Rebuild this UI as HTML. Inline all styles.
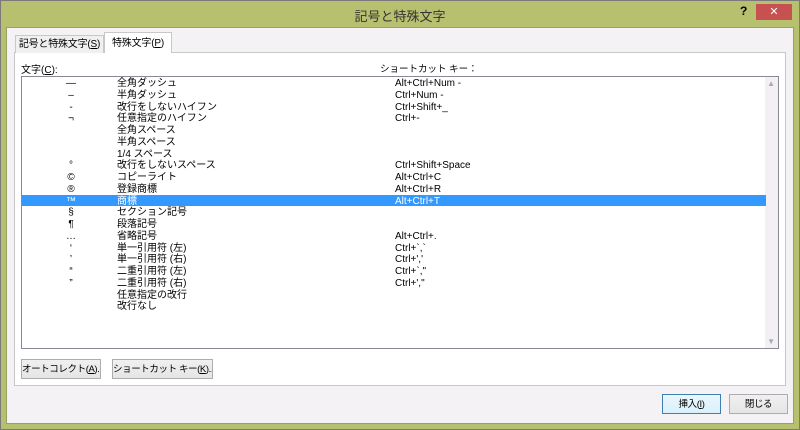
<!DOCTYPE html><html><head><style>
*{margin:0;padding:0;box-sizing:border-box}
body{width:800px;height:430px;overflow:hidden;background:#b7c06f;font-family:"Liberation Sans","Noto Sans CJK JP",sans-serif;font-size:10px;color:#000;position:relative}
.a{position:absolute;white-space:nowrap}
.outer{left:0;top:0;width:800px;height:430px;border:1px solid #7a7a7a}
.title{left:0;top:6px;width:800px;text-align:center;font-size:13px;color:#333}
.client{left:6px;top:27px;width:788px;height:397px;background:#f5f2f5;border:1px solid #9aa060}
.panel{left:14px;top:52px;width:772px;height:334px;background:#fff;border:1px solid #c8c8c8}
.tab{border:1px solid #c8c8c8;border-bottom:none;height:18px;line-height:17px;text-align:center;font-size:10px;letter-spacing:-0.2px}
.list{left:21px;top:76px;width:758px;height:273px;border:1px solid #8a8a96;background:#fff}
.row{position:absolute;left:0;height:11.75px;width:744px;font-size:10px}
.row span{position:absolute;white-space:nowrap;top:0;line-height:13px}
.sel{background:#3399ff;color:#fff}
.btn{border:1px solid #adadad;background:linear-gradient(#f0f0f0,#e5e5e5);text-align:center;line-height:19px;font-size:9.5px;letter-spacing:-0.4px;overflow:hidden}
</style></head><body>
<div class="a outer"></div>
<div class="a title">記号と特殊文字</div>
<div class="a" style="left:740px;top:4px;font-weight:bold;font-size:12px">?</div>
<div class="a" style="left:756px;top:4px;width:36px;height:16px;background:#c75050;color:#fff;text-align:center;line-height:16px;font-size:11px">✕</div>
<div class="a client"></div>
<div class="a panel"></div>
<div class="a tab" style="left:15px;top:35px;width:89px;background:#f0f0f0">記号と特殊文字(<u>S</u>)</div>
<div class="a tab" style="left:104px;top:32px;width:68px;height:21px;background:#fff;line-height:22px">特殊文字(<u>P</u>)</div>
<div class="a" style="left:21px;top:61px">文字(<u>C</u>):</div>
<div class="a" style="left:380px;top:61px;font-size:9.5px">ショートカット キー：</div>
<div class="a list">
<div class="a" style="right:0;top:0;width:13px;height:271px;background:#f2f0f2"></div>
<div class="a" style="right:3px;top:2px;color:#aaa;font-size:8px">▲</div>
<div class="a" style="right:3px;bottom:2px;color:#aaa;font-size:8px">▼</div>
<div id="rows"></div>
</div>
<div class="a btn" style="left:21px;top:359px;width:80px;height:20px">オートコレクト(<u>A</u>)...</div>
<div class="a btn" style="left:112px;top:359px;width:101px;height:20px">ショートカット キー(<u>K</u>)...</div>
<div class="a btn" style="left:662px;top:394px;width:59px;height:20px;border-color:#3c7fb1;background:linear-gradient(#eaf6fd,#d9f0fc)">挿入(<u>I</u>)</div>
<div class="a btn" style="left:729px;top:394px;width:59px;height:20px">閉じる</div>
<script>
var d=[["—","全角ダッシュ","Alt+Ctrl+Num -"],["–","半角ダッシュ","Ctrl+Num -"],["-","改行をしないハイフン","Ctrl+Shift+_"],["¬","任意指定のハイフン","Ctrl+-"],["","全角スペース",""],["","半角スペース",""],["","1/4 スペース",""],["°","改行をしないスペース","Ctrl+Shift+Space"],["©","コピーライト","Alt+Ctrl+C"],["®","登録商標","Alt+Ctrl+R"],["™","商標","Alt+Ctrl+T"],["§","セクション記号",""],["¶","段落記号",""],["…","省略記号","Alt+Ctrl+."],["‘","単一引用符 (左)","Ctrl+`,`"],["’","単一引用符 (右)","Ctrl+','"],["“","二重引用符 (左)","Ctrl+`,\""],["”","二重引用符 (右)","Ctrl+',\""],["","任意指定の改行",""],["","改行なし",""]];
var h="";d.forEach(function(r,i){h+='<div class="row'+(i==10?' sel':'')+'" style="top:'+(i*11.75)+'px"><span style="left:38px;width:22px;text-align:center">'+r[0]+'</span><span style="left:95px">'+r[1]+'</span><span style="left:373px">'+r[2]+'</span></div>'});
document.getElementById("rows").innerHTML=h;
</script>
</body></html>
